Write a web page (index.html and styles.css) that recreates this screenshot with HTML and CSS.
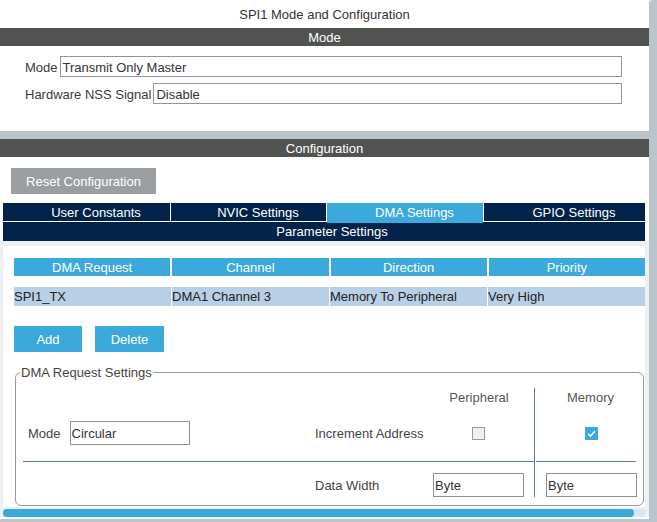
FILE: index.html
```html
<!DOCTYPE html>
<html>
<head>
<meta charset="utf-8">
<link rel="stylesheet" href="styles.css">
</head>
<body>
<div class="page">
  <div class="main">
    <div class="title">SPI1 Mode and Configuration</div>
    <div class="bar">Mode</div>
    <div class="mode-body">
      <div class="row"><span class="lbl">Mode</span><div class="field">Transmit Only Master</div></div>
      <div class="row"><span class="lbl">Hardware NSS Signal</span><div class="field">Disable</div></div>
    </div>
    <div class="band"></div>
    <div class="bar">Configuration</div>
    <div class="config-top">
      <div class="reset">Reset Configuration</div>
      <div class="tabs">
        <div class="tab">User Constants</div>
        <div class="tab">NVIC Settings</div>
        <div class="tab active">DMA Settings</div>
        <div class="tab">GPIO Settings</div>
      </div>
      <div class="param">Parameter Settings</div>
    </div>
    <div class="wrap">
      <div class="panel">
        <div class="thead">
          <div>DMA Request</div><div>Channel</div><div>Direction</div><div>Priority</div>
        </div>
        <div class="trow">
          <div>SPI1_TX</div><div>DMA1 Channel 3</div><div>Memory To Peripheral</div><div>Very High</div>
        </div>
        <div class="btns">
          <div class="btn add">Add</div>
          <div class="btn del">Delete</div>
        </div>
        <fieldset class="fs">
          <legend>DMA Request Settings</legend>
          <div class="grid">
            <div class="colhead c3">Peripheral</div>
            <div class="colhead c5">Memory</div>
            <div class="vline"></div>
            <div class="r2 c1 modebox"><span class="lbl2">Mode</span><div class="field2 wide">Circular</div></div>
            <div class="r2 c2 lbl2">Increment Address</div>
            <div class="r2 c3 cbcell"><span class="cb"></span></div>
            <div class="r2 c5 cbcell"><span class="cb on"><svg width="13" height="13" viewBox="0 0 13 13"><path d="M3 6.8 L5.4 9.1 L10 4.2" fill="none" stroke="#fff" stroke-width="1.5"/></svg></span></div>
            <div class="hline left"></div>
            <div class="hline right"></div>
            <div class="r4 c2 lbl2">Data Width</div>
            <div class="r4 c3"><div class="field2 dw">Byte</div></div>
            <div class="r4 c5 memcell"><div class="field2 dw">Byte</div></div>
          </div>
        </fieldset>
      </div>
      <div class="hscroll"><div class="thumb"></div></div>
    </div>
    <div class="bottomline"></div>
  </div>
  <div class="vscroll"></div>
</div>
</body>
</html>
```

FILE: styles.css
```css
* { box-sizing: border-box; }
html, body { margin: 0; padding: 0; background: #fff; }
body { font-family: "Liberation Sans", Arial, sans-serif; font-size: 13px; color: #333; }
.page { display: flex; width: 657px; height: 522px; overflow: hidden; }
.main { width: 649px; }
.vscroll { width: 8px; background: #b9c4cb; border-radius: 3px 0 0 0; }
.title { height: 28px; line-height: 30px; text-align: center; color: #333; }
.bar { height: 18px; line-height: 20px; background: #515351; color: #fff; text-align: center; }
.mode-body { padding: 10px 27px 27px 25px; display: flex; flex-direction: column; gap: 6px; }
.row { display: flex; align-items: center; gap: 2px; }
.lbl { color: #3a3a3a; white-space: nowrap; padding-top: 2px; }
.field { flex: 1; height: 21px; line-height: 21px; border: 1px solid #8f9599; padding: 0 1px 0 2px; color: #333; }
.band { height: 8px; background: #b9c4cb; }
.config-top { padding-top: 11px; }
.reset { margin-left: 11px; width: 145px; height: 26px; line-height: 28px; background: #9a9ea1; color: #fff; text-align: center; }
.tabs { margin: 9px 0 0 3px; width: 642px; display: grid; grid-template-columns: 167px 155px 156px 161px; column-gap: 1px; }
.tab { height: 18px; line-height: 20px; background: #03234b; color: #fff; text-align: center; padding-left: 19px; }
.tab.active { background: #3ba9db; position: relative; z-index: 1; box-shadow: 0 2px 0 #3ba9db; }
.param { margin: 1px 0 0 3px; width: 642px; height: 19px; line-height: 19px; background: #03234b; color: #fff; text-align: center; padding-left: 16px; }
.wrap { background: #eef1f4; padding: 5px 4px 0 3px; }
.panel { background: #fff; padding: 12px 0 1px 11px; }
.thead, .trow { display: grid; grid-template-columns: repeat(4, 1fr); column-gap: 2px; }
.thead div { height: 18px; line-height: 20px; background: #3ba9db; color: #fff; text-align: center; }
.trow { margin-top: 11px; column-gap: 1px; }
.trow div { height: 19px; line-height: 19px; background: #b9cfe6; color: #222; }
.btns { display: flex; gap: 13px; margin-top: 20px; }
.btn { height: 26px; line-height: 28px; background: #3ba9db; color: #fff; text-align: center; }
.add { width: 68px; }
.del { width: 69px; }
.fs { margin: 13px 1px 0 1px; border: 1px solid #999; border-radius: 6px; padding: 0 7px 7px 7px; min-width: 0; }
.fs legend { padding: 0 1px; margin-left: -3px; line-height: 15px; color: #444; }
.grid { margin-top: 8px; display: grid; grid-template-columns: 292px 118px 101px 2px 100px; grid-template-rows: 22px 51px 1px 36px; }
.c1 { grid-column: 1; }
.c2 { grid-column: 2; }
.c3 { grid-column: 3; }
.c5 { grid-column: 5; }
.r2 { grid-row: 2; }
.r4 { grid-row: 4; }
.colhead { grid-row: 1; line-height: 20px; text-align: center; color: #555; }
.colhead.c3 { padding-right: 9px; }
.colhead.c5 { padding-left: 9px; }
.vline { grid-column: 4; grid-row: 1 / 5; width: 1px; background: #5b76b8; margin-bottom: 1px; }
.hline { grid-row: 3; background: #5b76b8; height: 1px; }
.hline.left { grid-column: 1 / 4; }
.hline.right { grid-column: 5; }
.modebox { display: flex; align-items: flex-start; padding-left: 5px; gap: 9px; }
.lbl2 { line-height: 26px; margin-top: 11px; color: #444; }
.field2 { height: 24px; line-height: 24px; border: 1px solid #8f8f8f; padding: 0 1px; color: #333; margin-top: 11px; }
.wide { width: 120px; }
.dw { width: 91px; }
.memcell { padding-left: 10px; }
.cbcell { display: flex; justify-content: center; padding-top: 17px; }
.c3.cbcell { padding-right: 10px; }
.c5.cbcell { padding-left: 10px; }
.cb { width: 13px; height: 13px; border: 1px solid #9a9a9a; background: #eef0f2; display: block; }
.cb.on { border: none; background: #3ba9db; }
.cb svg { display: block; }
.hscroll { margin-top: 2px; height: 8px; background: #d6e7f2; }
.thumb { width: 631px; height: 8px; background: #3ba9db; border-radius: 4px; }
.bottomline { margin-top: 2px; height: 3px; background: #b9c4cb; }
```
